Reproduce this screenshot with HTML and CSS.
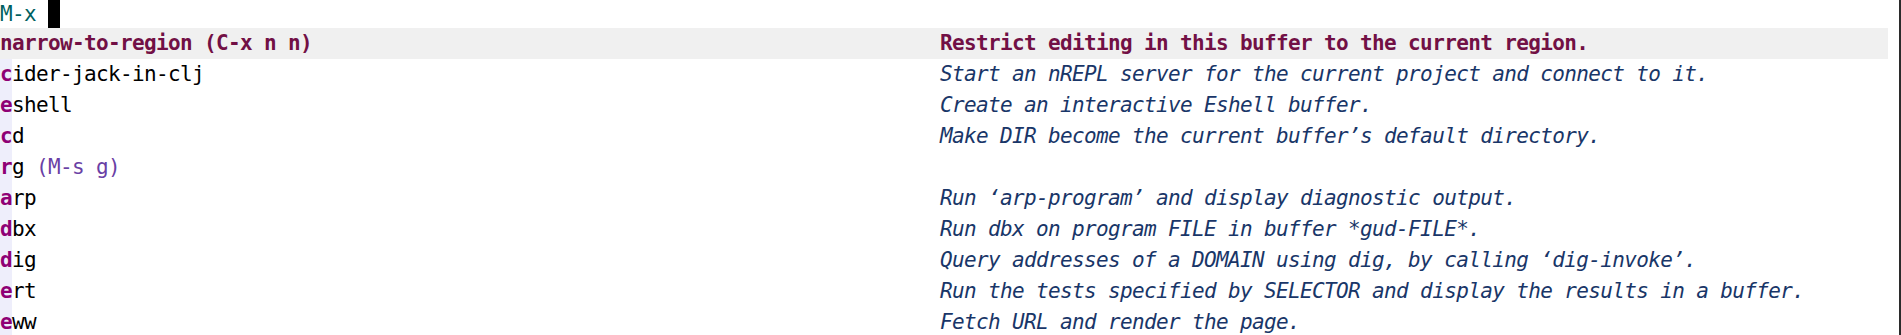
FILE: index.html
```html
<!DOCTYPE html>
<html lang="en">
<head>
    <meta charset="utf-8" />
    <title>M-x</title>
    <link rel="stylesheet" href="styles.css">
</head>
<body>
    <div class="frame">
        <div class="minibuffer"><span class="prompt">M-x</span><span class="cursor"></span></div>

        <ul class="candidates">
            <li class="cand current">
                <span class="name">narrow-to-region <span class="key">(C-x n n)</span></span>
                <span class="doc">Restrict editing in this buffer to the current region.</span>
            </li>
            <li class="cand">
                <span class="name"><b class="hit">c</b>ider-jack-in-clj</span>
                <span class="doc">Start an nREPL server for the current project and connect to it.</span>
            </li>
            <li class="cand">
                <span class="name"><b class="hit">e</b>shell</span>
                <span class="doc">Create an interactive Eshell buffer.</span>
            </li>
            <li class="cand">
                <span class="name"><b class="hit">c</b>d</span>
                <span class="doc">Make DIR become the current buffer’s default directory.</span>
            </li>
            <li class="cand">
                <span class="name"><b class="hit">r</b>g <span class="key">(M-s g)</span></span>
                <span class="doc"></span>
            </li>
            <li class="cand">
                <span class="name"><b class="hit">a</b>rp</span>
                <span class="doc">Run ‘arp-program’ and display diagnostic output.</span>
            </li>
            <li class="cand">
                <span class="name"><b class="hit">d</b>bx</span>
                <span class="doc">Run dbx on program FILE in buffer *gud-FILE*.</span>
            </li>
            <li class="cand">
                <span class="name"><b class="hit">d</b>ig</span>
                <span class="doc">Query addresses of a DOMAIN using dig, by calling ‘dig-invoke’.</span>
            </li>
            <li class="cand">
                <span class="name"><b class="hit">e</b>rt</span>
                <span class="doc">Run the tests specified by SELECTOR and display the results in a buffer.</span>
            </li>
            <li class="cand">
                <span class="name"><b class="hit">e</b>ww</span>
                <span class="doc">Fetch URL and render the page.</span>
            </li>
        </ul>
    </div>
</body>
</html>
```

FILE: styles.css
```css
html, body {
    margin: 0;
    padding: 0;
    background: #fff;
    overflow: hidden;
}

body {
    font-family: 'DejaVu Sans Mono', 'Liberation Mono', monospace;
    font-size: 21px;
    letter-spacing: -0.64px;
    color: #000;
}

.frame {
    width: 1888px;
    height: 335px;
    padding-right: 11px;
    border-right: 2px solid #2b2b2b;
}

.minibuffer {
    height: 28px;
    line-height: 28px;
    display: flex;
}

.prompt {
    color: #005f5f;
}

.cursor {
    width: 12px;
    height: 28px;
    margin-left: 12px;
    background: #000;
}

.candidates {
    list-style: none;
    margin: 0;
    padding: 0;
}

.cand {
    display: grid;
    grid-template-columns: 940px 1fr;
    height: 31px;
    line-height: 31px;
    white-space: pre;
}

.cand .doc {
    font-style: italic;
    color: #193668;
}

.cand .key {
    color: #6a3fa5;
}

.hit {
    display: inline-block;
    width: 12px;
    height: 31px;
    vertical-align: top;
    font-weight: bold;
    color: #8f0075;
    background: #eeeefb;
}

.cand.current {
    background: #f0f0f0;
    font-weight: bold;
    color: #721045;
}

.cand.current .doc,
.cand.current .key {
    font-style: normal;
    color: #721045;
}
```
